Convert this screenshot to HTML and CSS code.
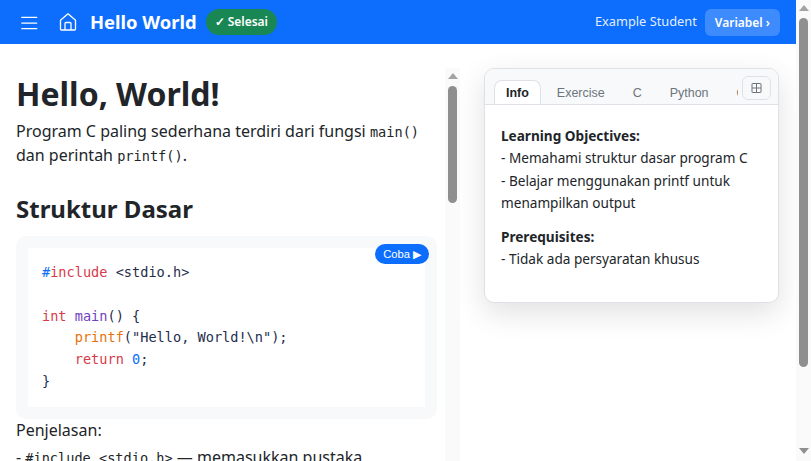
FILE: index.html
```html
<!DOCTYPE html>
<html lang="en">
<head>
    <meta charset="UTF-8">
    <meta name="viewport" content="width=device-width, initial-scale=1.0">
    <title>Hello World</title>
    <link rel="stylesheet" href="styles.css">
</head>
<body>
    <div class="app">
        <nav class="navbar">
            <button class="nav-icon" aria-label="Menu">
                <svg width="20" height="20" viewBox="0 0 16 16" fill="none" stroke="currentColor" stroke-width="1" stroke-linecap="round">
                    <path d="M2.200 4.300h12M2.200 8.800h12M2.200 13.300h12"/>
                </svg>
            </button>
            <a class="nav-icon home" aria-label="Home">
                <svg width="20" height="20" viewBox="0 0 20 20" fill="none" stroke="currentColor" stroke-width="1.3" stroke-linejoin="round">
                    <path d="M2.5 8.2 10 1.8l7.500 6.400V17a1 1 0 0 1-1 1h-13a1 1 0 0 1-1-1z"/>
                    <path d="M7 18v-6.500a1 1 0 0 1 1-1h4a1 1 0 0 1 1 1V18"/>
                </svg>
            </a>
            <span class="nav-title">Hello World</span>
            <span class="badge">✓ Selesai</span>
            <span class="student">Example Student</span>
            <button class="var-btn">Variabel ›</button>
        </nav>

        <div class="page">
            <div class="lesson-wrap">
                <main class="lesson">
                    <h1>Hello, World!</h1>
                    <p>Program C paling sederhana terdiri dari fungsi <code>main()</code> dan perintah <code>printf()</code>.</p>
                    <h2>Struktur Dasar</h2>
                    <div class="code-box">
                        <button class="try-btn">Coba ▶</button>
<pre><span class="blue">#</span><span class="red">include</span> &lt;stdio.h&gt;

<span class="red">int</span> <span class="purple">main</span>() {
    <span class="orange">printf</span>("Hello, World!\n");
    <span class="red">return</span> <span class="blue">0</span>;
}</pre>
                    </div>
                    <p class="tight">Penjelasan:</p>
                    <p>- <code>#include &lt;stdio.h&gt;</code> — memasukkan pustaka</p>
                </main>
                <div class="scrollbar lesson-bar">
                    <span class="arrow-up"></span>
                    <span class="thumb lesson-thumb"></span>
                </div>
            </div>

            <aside class="side">
                <div class="card">
                    <div class="tabs">
                        <div class="tab-list">
                            <a class="tab active">Info</a>
                            <a class="tab">Exercise</a>
                            <a class="tab">C</a>
                            <a class="tab">Python</a>
                            <a class="tab">Output</a>
                        </div>
                        <button class="grid-btn" aria-label="Layout">
                            <svg width="12" height="12" viewBox="0 0 12 12" fill="none" stroke="currentColor" stroke-width="1">
                                <rect x="1" y="1.500" width="9" height="9" rx="0.500"/>
                                <path d="M5.500 1.500v9M1 6h9"/>
                            </svg>
                        </button>
                    </div>
                    <div class="card-body">
                        <p><strong>Learning Objectives:</strong><br>- Memahami struktur dasar program C<br>- Belajar menggunakan printf untuk menampilkan output</p>
                        <p><strong>Prerequisites:</strong><br>- Tidak ada persyaratan khusus</p>
                    </div>
                </div>
            </aside>
        </div>
    </div>

    <div class="scrollbar page-bar">
        <span class="arrow-up"></span>
        <span class="thumb page-thumb"></span>
        <span class="arrow-down"></span>
    </div>
</body>
</html>
```

FILE: styles.css
```css
* {
    margin: 0;
    padding: 0;
    box-sizing: border-box;
}

html, body {
    height: 100%;
    overflow: hidden;
}

body {
    display: flex;
    font-family: "Noto Sans", sans-serif;
    font-size: 16px;
    line-height: 1.5;
    color: #212529;
    background: #fff;
}

button {
    border: none;
    background: none;
    cursor: pointer;
}

.app {
    flex: 1;
    min-width: 0;
    display: flex;
    flex-direction: column;
}

/* drawn scrollbars, the page and the lesson column each have one */
.scrollbar {
    flex: none;
    width: 15px;
    display: flex;
    flex-direction: column;
    align-items: center;
    background: #fafafa;
}

.arrow-up {
    margin-top: 5px;
    border: 5px solid transparent;
    border-top: 0;
    border-bottom: 6px solid #a3a3a3;
}

.arrow-down {
    margin: auto 0 7px;
    border: 5px solid transparent;
    border-bottom: 0;
    border-top: 6px solid #8f8f8f;
}

.thumb {
    width: 9px;
    border-radius: 5px;
    background: #8f8f8f;
}

.page-thumb {
    margin-top: 7px;
    height: 349px;
}

.lesson-thumb {
    margin-top: 7px;
    height: 117px;
}

.lesson-bar {
    position: relative;
    z-index: 1;
}

.navbar {
    flex: none;
    height: 44px;
    background: #0d6efd;
    color: #fff;
    display: flex;
    align-items: center;
    padding: 0 16px 0 19px;
}

.nav-icon {
    display: flex;
    color: #fff;
}

.home {
    margin-left: 19px;
}

.nav-title {
    margin-left: 12px;
    font-size: 18.4px;
    font-weight: 700;
}

.badge {
    margin-left: 9px;
    padding: 0 9px;
    height: 26px;
    line-height: 25px;
    border-radius: 13px;
    background: #198754;
    font-size: 12px;
    font-weight: 600;
}

.student {
    margin-left: auto;
    font-size: 12.8px;
    color: rgba(255, 255, 255, 0.9);
}

.var-btn {
    margin-left: 8px;
    height: 27px;
    padding: 0 10px;
    border-radius: 6px;
    background: rgba(255, 255, 255, 0.2);
    color: #fff;
    font-family: inherit;
    font-size: 12px;
    font-weight: 600;
}

.page {
    flex: 1;
    min-height: 0;
    display: flex;
    padding-top: 24px;
}

.lesson-wrap {
    flex: none;
    width: 460px;
    display: flex;
}

.lesson {
    flex: 1;
    min-width: 0;
    overflow: hidden;
    padding: 7px 8px 0 16px;
}

h1 {
    font-size: 32px;
    font-weight: 700;
    line-height: 1.2;
    margin-bottom: 6px;
}

h2 {
    font-size: 24px;
    font-weight: 700;
    line-height: 1.2;
    margin: 28px 0 12px;
}

p {
    margin-bottom: 8px;
}

.tight {
    margin: -1px 0 3px;
}

code {
    font-family: "DejaVu Sans Mono", monospace;
    font-size: 13.6px;
}

.code-box {
    position: relative;
    background: #f8f9fa;
    border-radius: 10px;
    padding: 12px;
}

pre {
    background: #fff;
    padding: 14px;
    font-family: "DejaVu Sans Mono", monospace;
    font-size: 13.6px;
    line-height: 1.6;
    color: #1f2d4d;
}

.red { color: #d73a49; }
.blue { color: #0d6efd; }
.purple { color: #6f42c1; }
.orange { color: #e8710a; }

.try-btn {
    position: absolute;
    top: 8px;
    right: 8px;
    height: 20px;
    padding: 0 8px;
    border-radius: 10px;
    background: #0d6efd;
    color: #fff;
    font-family: "Liberation Sans", sans-serif;
    font-size: 11.2px;
}

.side {
    flex: 1;
    min-width: 0;
    padding: 0 17px 0 24px;
}

.card {
    background: #fff;
    border: 1px solid #dee2e6;
    border-radius: 10px;
    box-shadow: 0 10px 30px rgba(0, 0, 0, 0.12);
    overflow: hidden;
}

.tabs {
    display: flex;
    height: 36px;
    padding: 11px 7px 0 9px;
    background: #f8f9fa;
    border-bottom: 1px solid #dee2e6;
    font-family: "Liberation Sans", sans-serif;
    font-size: 12.48px;
}

.tab-list {
    flex: 1;
    min-width: 0;
    display: flex;
    gap: 4px;
    overflow: hidden;
    margin-right: 4px;
}

.tab {
    flex: none;
    height: 25px;
    line-height: 24px;
    padding: 0 11px;
    color: #6c757d;
    border: 1px solid transparent;
    border-radius: 8px 8px 0 0;
}

.tab.active {
    background: #fff;
    border-color: #dee2e6;
    border-bottom-color: #fff;
    color: #212529;
    font-weight: 700;
}

.grid-btn {
    flex: none;
    margin-top: -4px;
    width: 29px;
    height: 24px;
    display: flex;
    align-items: center;
    justify-content: center;
    background: #f8f9fa;
    border: 1px solid #dee2e6;
    border-radius: 6px;
    color: #6c757d;
}

.card-body {
    padding: 20px 16px 20px;
    font-size: 13.6px;
    line-height: 1.65;
}

.card-body p {
    margin-bottom: 11px;
}

.card-body strong {
    font-weight: 700;
}
```
